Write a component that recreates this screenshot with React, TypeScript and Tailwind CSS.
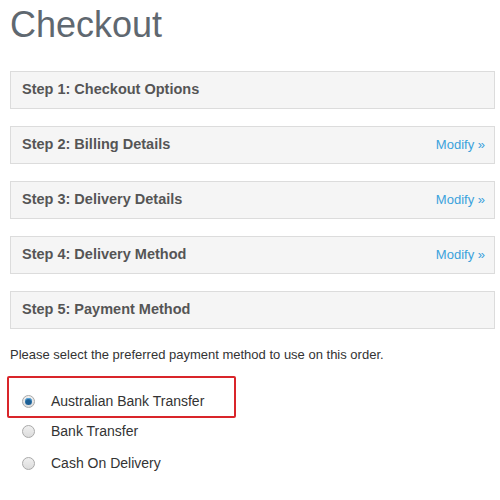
const steps = [
  { title: "Step 1: Checkout Options", modify: false },
  { title: "Step 2: Billing Details", modify: true },
  { title: "Step 3: Delivery Details", modify: true },
  { title: "Step 4: Delivery Method", modify: true },
  { title: "Step 5: Payment Method", modify: false },
];

function Radio({ checked }: { checked?: boolean }) {
  return (
    <span className="w-[13px] h-[13px] rounded-full border border-[#a9a9a9] bg-gradient-to-b from-[#f0f0f0] to-[#dcdcdc] flex items-center justify-center shrink-0">
      {checked && <span className="w-[7px] h-[7px] rounded-full bg-[#1d5f95] shadow-[inset_0_1px_1px_#5fb0e6]" />}
    </span>
  );
}

export default function App() {
  return (
    <div className="w-[500px] h-[500px] bg-white pl-[10px] pr-[5px] font-['Liberation_Sans',Arial,sans-serif] overflow-hidden">
      <h1 className="text-[36px] leading-[40px] pt-[5px] text-[#5f6870]">Checkout</h1>
      <div className="mt-[26px] flex flex-col gap-[17px]">
        {steps.map((s) => (
          <div
            key={s.title}
            className="h-[38px] bg-[#f5f5f5] border border-[#dcdcdc] flex items-center justify-between pl-[11px] pr-[9px]"
          >
            <span className="text-[14.5px] font-bold text-[#555]">{s.title}</span>
            {s.modify && <span className="text-[13px] text-[#3aa2dc]">Modify »</span>}
          </div>
        ))}
      </div>
      <p className="mt-[18px] text-[13px] leading-[16px] text-[#333]">
        Please select the preferred payment method to use on this order.
      </p>
      <div className="mt-[13px] -ml-[3px] w-[229px] h-[42px] border-2 border-[#d9252a] rounded-[2px] flex items-center gap-[16px] pl-[13px] pt-[8px]">
        <Radio checked />
        <span className="text-[14px] text-[#333]">Australian Bank Transfer</span>
      </div>
      <div className="flex flex-col">
        <label className="h-[26px] flex items-center gap-[16px] pl-[12px]">
          <Radio />
          <span className="text-[14px] text-[#333]">Bank Transfer</span>
        </label>
        <label className="mt-[6px] h-[26px] flex items-center gap-[16px] pl-[12px]">
          <Radio />
          <span className="text-[14px] text-[#333]">Cash On Delivery</span>
        </label>
      </div>
    </div>
  );
}
